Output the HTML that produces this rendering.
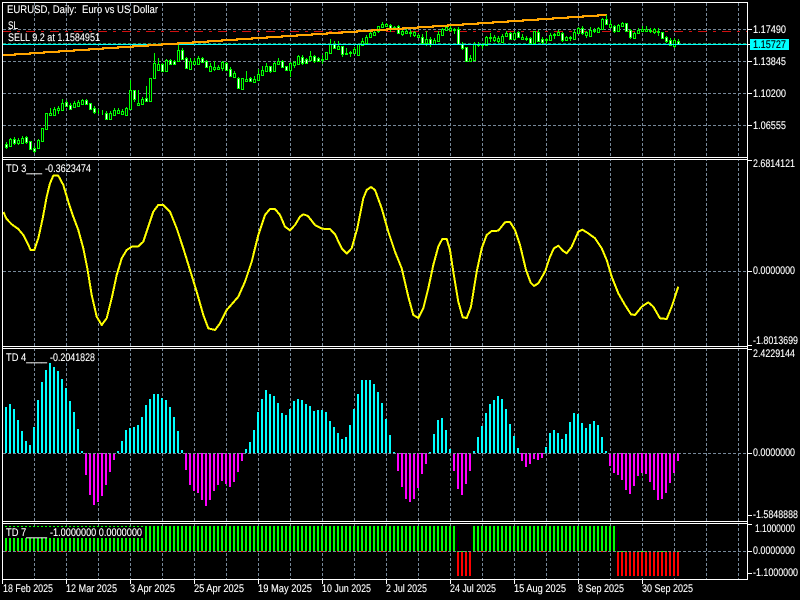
<!DOCTYPE html>
<html><head><meta charset="utf-8"><title>EURUSD, Daily</title>
<style>
html,body{margin:0;padding:0;background:#000;width:800px;height:600px;overflow:hidden}
svg{display:block}
text{font-family:"Liberation Sans",sans-serif;font-size:11px;fill:#fff;stroke:#fff;stroke-width:.12px}
</style></head><body>
<svg width="800" height="600" viewBox="0 0 800 600" shape-rendering="crispEdges" text-rendering="optimizeSpeed">
<rect width="800" height="600" fill="#000"/>
<!-- grid -->
<path fill="none" stroke="#778899" stroke-dasharray="3 2" d="M34.5 3V579M66.5 3V579M98.5 3V579M130.5 3V579M162.5 3V579M194.5 3V579M226.5 3V579M258.5 3V579M290.5 3V579M322.5 3V579M354.5 3V579M386.5 3V579M418.5 3V579M450.5 3V579M482.5 3V579M514.5 3V579M546.5 3V579M578.5 3V579M610.5 3V579M642.5 3V579M674.5 3V579M706.5 3V579M738.5 3V579"/>
<path fill="none" stroke="#778899" stroke-dasharray="3 2" d="M3 29.5H747M3 61.5H747M3 93.5H747M3 125.5H747M3 271.5H747"/>
<!-- order lines -->
<path fill="none" stroke="#d01010" stroke-dasharray="9 6 3 6" d="M2 31.5H747"/>
<path fill="none" stroke="#2e8b57" stroke-dasharray="3 2" d="M3 43.5H747"/>
<!-- wicks -->
<path fill="none" stroke="#00ff00" d="M6.5 142V149M10.5 138V147M14.5 137V145M18.5 138V145M22.5 136V144M26.5 136V144M30.5 141V149M34.5 146V153M38.5 139V148M42.5 128V141M46.5 113V129M50.5 108V116M54.5 107V115M58.5 106V114M62.5 99V110M66.5 100V107M70.5 103V110M74.5 101V108M78.5 100V107M82.5 99V105M86.5 99V105M90.5 103V110M94.5 106V114M98.5 109V114M102.5 110V115M106.5 111V120M110.5 111V120M114.5 108V116M118.5 108V114M122.5 109V115M126.5 107V115M130.5 80V109M134.5 90V102M138.5 90V106M142.5 97V105M146.5 86V101M150.5 78V101M154.5 53V78M158.5 58V71M162.5 63V72M166.5 59V71M170.5 59V65M174.5 60V65M178.5 44V61M182.5 48V59M186.5 57V68M190.5 58V69M194.5 58V65M198.5 56V64M202.5 57V63M206.5 60V68M210.5 63V72M214.5 61V71M218.5 65V70M222.5 61V71M226.5 62V71M230.5 67V77M234.5 71V77M238.5 77V89M242.5 78V90M246.5 71V81M250.5 77V82M254.5 76V83M258.5 69V80M262.5 66V75M266.5 63V71M270.5 66V73M274.5 62V71M278.5 58V65M282.5 60V68M286.5 66V71M290.5 62V77M294.5 61V68M298.5 55V65M302.5 55V65M306.5 58V64M310.5 51V60M314.5 55V63M318.5 57V62M322.5 55V64M326.5 52V60M330.5 39V53M334.5 41V49M338.5 41V50M342.5 46V57M346.5 48V55M350.5 51V57M354.5 47V54M358.5 44V55M362.5 38V46M366.5 35V43M370.5 31V38M374.5 30V36M378.5 26V33M382.5 22V28M386.5 23V27M390.5 24V32M394.5 26V29M398.5 25V34M402.5 28V36M406.5 29V34M410.5 30V37M414.5 31V37M418.5 34V38M422.5 34V44M426.5 31V46M430.5 37V47M434.5 38V44M438.5 31V41M442.5 28V36M446.5 26V31M450.5 26V32M454.5 28V34M458.5 27V44M462.5 42V50M466.5 47V61M470.5 55V61M474.5 42V60M478.5 42V47M482.5 43V49M486.5 36V46M490.5 33V42M494.5 35V42M498.5 36V43M502.5 34V43M506.5 31V37M510.5 32V40M514.5 31V40M518.5 31V38M522.5 34V40M526.5 36V41M530.5 37V45M534.5 31V45M538.5 30V42M542.5 37V44M546.5 38V45M550.5 33V41M554.5 33V39M558.5 30V36M562.5 32V42M566.5 36V41M570.5 36V41M574.5 30V40M578.5 27V34M582.5 26V35M586.5 31V38M590.5 27V36M594.5 28V33M598.5 27V33M602.5 18V29M606.5 15V25M610.5 20V28M614.5 25V33M618.5 24V32M622.5 22V27M626.5 23V32M630.5 29V39M634.5 32V39M638.5 28V34M642.5 26V32M646.5 26V32M650.5 28V33M654.5 28V34M658.5 28V36M662.5 32V39M666.5 36V43M670.5 38V46M674.5 38V48M678.5 39V45"/>
<!-- black bodies -->
<path fill="#000" stroke="#00ff00" d="M9.5 139.5h2v7h-2zM17.5 140.5h2v3h-2zM21.5 138.5h2v5h-2zM37.5 140.5h2v8h-2zM41.5 128.5h2v13h-2zM45.5 113.5h2v16h-2zM53.5 109.5h2v6h-2zM61.5 103.5h2v7h-2zM73.5 103.5h2v4h-2zM77.5 102.5h2v4h-2zM81.5 100.5h2v4h-2zM109.5 113.5h2v6h-2zM113.5 110.5h2v5h-2zM117.5 110.5h2v3h-2zM121.5 111.5h2v3h-2zM125.5 108.5h2v7h-2zM129.5 90.5h2v19h-2zM141.5 99.5h2v5h-2zM149.5 78.5h2v23h-2zM153.5 63.5h2v15h-2zM157.5 64.5h2v6h-2zM165.5 60.5h2v11h-2zM177.5 50.5h2v11h-2zM189.5 61.5h2v8h-2zM193.5 61.5h2v3h-2zM197.5 58.5h2v6h-2zM209.5 66.5h2v5h-2zM221.5 62.5h2v6h-2zM233.5 73.5h2v4h-2zM241.5 78.5h2v11h-2zM253.5 79.5h2v3h-2zM257.5 74.5h2v6h-2zM261.5 70.5h2v5h-2zM265.5 66.5h2v5h-2zM273.5 63.5h2v8h-2zM277.5 61.5h2v3h-2zM289.5 63.5h2v7h-2zM293.5 62.5h2v3h-2zM297.5 56.5h2v8h-2zM309.5 56.5h2v4h-2zM325.5 52.5h2v7h-2zM329.5 44.5h2v9h-2zM337.5 46.5h2v3h-2zM353.5 49.5h2v4h-2zM357.5 44.5h2v11h-2zM361.5 41.5h2v4h-2zM365.5 37.5h2v6h-2zM369.5 33.5h2v4h-2zM373.5 32.5h2v3h-2zM377.5 26.5h2v5h-2zM381.5 24.5h2v3h-2zM385.5 24.5h2v2h-2zM401.5 31.5h2v3h-2zM405.5 31.5h2v2h-2zM413.5 32.5h2v3h-2zM417.5 35.5h2v2h-2zM425.5 39.5h2v4h-2zM433.5 40.5h2v4h-2zM437.5 34.5h2v7h-2zM441.5 29.5h2v6h-2zM445.5 27.5h2v3h-2zM449.5 28.5h2v2h-2zM469.5 58.5h2v3h-2zM473.5 44.5h2v16h-2zM485.5 37.5h2v8h-2zM493.5 37.5h2v3h-2zM497.5 38.5h2v3h-2zM501.5 36.5h2v6h-2zM505.5 33.5h2v3h-2zM513.5 33.5h2v6h-2zM533.5 31.5h2v12h-2zM549.5 35.5h2v5h-2zM557.5 32.5h2v3h-2zM565.5 37.5h2v3h-2zM573.5 32.5h2v7h-2zM577.5 28.5h2v5h-2zM585.5 32.5h2v3h-2zM589.5 30.5h2v6h-2zM597.5 28.5h2v4h-2zM601.5 19.5h2v10h-2zM609.5 24.5h2v3h-2zM617.5 25.5h2v6h-2zM621.5 23.5h2v3h-2zM633.5 33.5h2v5h-2zM637.5 30.5h2v3h-2zM641.5 29.5h2v2h-2zM645.5 29.5h2v2h-2zM653.5 29.5h2v3h-2zM673.5 40.5h2v6h-2zM49.5 113.5h2v2h-2zM57.5 108.5h2v2h-2zM137.5 103.5h2v2h-2zM213.5 67.5h2v2h-2zM217.5 67.5h2v2h-2zM245.5 79.5h2v2h-2zM321.5 59.5h2v1h-2zM345.5 53.5h2v1h-2zM349.5 52.5h2v1h-2zM393.5 27.5h2v1h-2zM409.5 32.5h2v1h-2zM453.5 29.5h2v1h-2zM477.5 44.5h2v1h-2zM481.5 44.5h2v1h-2zM489.5 37.5h2v1h-2zM521.5 37.5h2v2h-2zM525.5 38.5h2v1h-2zM545.5 39.5h2v1h-2zM553.5 34.5h2v1h-2zM569.5 37.5h2v1h-2zM593.5 30.5h2v1h-2zM649.5 30.5h2v1h-2zM657.5 31.5h2v1h-2z"/>
<!-- white bodies -->
<path fill="#fff" stroke="#00ff00" d="M5.5 144.5h2v3h-2zM13.5 139.5h2v4h-2zM25.5 137.5h2v5h-2zM29.5 141.5h2v8h-2zM33.5 148.5h2v3h-2zM65.5 102.5h2v4h-2zM69.5 105.5h2v4h-2zM85.5 100.5h2v4h-2zM89.5 103.5h2v6h-2zM93.5 108.5h2v4h-2zM105.5 113.5h2v6h-2zM133.5 90.5h2v9h-2zM145.5 98.5h2v3h-2zM161.5 64.5h2v7h-2zM169.5 60.5h2v4h-2zM173.5 61.5h2v3h-2zM181.5 50.5h2v9h-2zM185.5 58.5h2v10h-2zM201.5 58.5h2v4h-2zM205.5 61.5h2v6h-2zM225.5 63.5h2v7h-2zM229.5 69.5h2v7h-2zM237.5 78.5h2v10h-2zM249.5 78.5h2v3h-2zM269.5 66.5h2v5h-2zM281.5 61.5h2v6h-2zM285.5 66.5h2v4h-2zM301.5 57.5h2v6h-2zM305.5 59.5h2v4h-2zM313.5 56.5h2v5h-2zM317.5 58.5h2v3h-2zM333.5 44.5h2v4h-2zM341.5 46.5h2v8h-2zM389.5 25.5h2v3h-2zM397.5 26.5h2v7h-2zM421.5 37.5h2v6h-2zM429.5 39.5h2v5h-2zM457.5 29.5h2v15h-2zM461.5 44.5h2v4h-2zM465.5 47.5h2v14h-2zM509.5 33.5h2v6h-2zM517.5 32.5h2v5h-2zM529.5 38.5h2v5h-2zM537.5 32.5h2v9h-2zM541.5 39.5h2v3h-2zM561.5 33.5h2v7h-2zM581.5 28.5h2v5h-2zM605.5 19.5h2v5h-2zM613.5 26.5h2v5h-2zM625.5 23.5h2v8h-2zM629.5 30.5h2v7h-2zM661.5 32.5h2v6h-2zM665.5 37.5h2v4h-2zM669.5 40.5h2v5h-2zM677.5 41.5h2v3h-2z"/>
<!-- bid -->
<path stroke="#00ffff" d="M3 44.5H747"/>
<!-- trend -->
<path fill="none" stroke="#ffa500" stroke-width="2" d="M3 55H15V54H30V53H44V52H59V51H74V50H89V49H103V48H118V47H133V46H148V45H162V44H178V43H193V42H208V41H222V40H237V39H252V38H267V37H282V36H297V35H312V34H327V33H342V32H357V31H372V30H387V29H403V28H418V27H433V26H448V25H463V24H478V23H493V22H508V21H523V20H538V19H553V18H568V17H583V16H598V15H607"/>
<path stroke="#00ff00" d="M606.5 15V19"/>
<!-- yellow -->
<path fill="none" stroke="#ffff00" stroke-width="2" stroke-linejoin="round" d="M3.3 212L6.7 219L11.7 224.3L18.3 229L23.3 235L28.3 245L30.7 250L34.3 250L38.3 238.3L42.7 218.3L46.7 196.7L50 183.3L53.3 175.7L58.3 175.7L63.3 185L68.3 201.7L73.3 216.7L78.3 230L83.3 248.3L87.3 268.3L91.7 295L96.7 316.7L101.7 325L106.7 318.3L111.7 298.3L116.7 275L121.7 258.3L126.7 250L131.7 246.7L138.3 246.3L143.3 241.7L148.3 226.7L153.3 211.7L158.3 205L163.3 205L170 211.7L176.7 228.3L183.3 248.3L190 270L196.7 291.7L203.3 315L208.3 328.3L215 330L220 323.3L226.7 310L231.7 304.3L238.3 296.7L245 281.7L251.7 261.7L258.3 235L265 215L270 209L275 209L280 215L285 226.7L290 230.3L295 225L300 216.7L303.3 214.3L308 216L315 225L322 228.7L330 229L335 234.3L341.7 248.3L346.7 253.7L351.7 248.3L357.3 228.3L363.3 198.3L366.7 190L371 187L375 190L381.7 208.3L388.3 231.7L395 251.7L401.7 268.3L408.3 296.7L413.3 315L418.3 318L423.3 308.3L428.3 288.3L433.3 265L438.3 246.7L442.3 239L446.7 239L450 250L453.3 271.7L458.3 301.7L462.7 317.3L466.7 318L471 306.7L476.7 271.7L481.7 248.3L486.7 235L491.7 231L498.3 230.7L505 222.3L510 222L515 230L520 245L526 270L530.7 282.7L534 286L538.3 283.3L545 271.7L550 256.7L554 248.3L558.3 245.7L563.3 251L566.7 253.3L571.7 246.7L578.3 231.7L582.3 229.7L588.3 233.3L595 238.3L601.7 248.3L606.7 260L611.7 276.7L618.3 293.3L625 305L631 314.3L635 315L641.7 306.7L648.3 302.3L653.3 306.7L660 318.3L666.7 319L671.7 306.7L678.3 286.7"/>
<!-- histogram -->
<path fill="none" stroke="#00ffff" stroke-width="2" d="M6 453V407M10 453V404M14 453V409M18 453V420M22 453V431M26 453V441M30 453V445M34 453V427M38 453V400M42 453V382M46 453V370M50 453V363M54 453V367M58 453V371M62 453V379M66 453V388M70 453V401M74 453V412M78 453V429M82 453V451M118 453V451M122 453V441M126 453V430M130 453V428M134 453V427M138 453V425M142 453V417M146 453V405M150 453V399M154 453V394M158 453V394M162 453V398M166 453V400M170 453V407M174 453V417M178 453V431M182 453V450M246 453V449M250 453V442M254 453V430M258 453V412M262 453V399M266 453V390M270 453V394M274 453V396M278 453V403M282 453V413M286 453V415M290 453V409M294 453V401M298 453V399M302 453V400M306 453V404M310 453V406M314 453V411M318 453V410M322 453V410M326 453V412M330 453V421M334 453V427M338 453V433M342 453V439M346 453V437M350 453V425M354 453V409M358 453V394M362 453V380M366 453V380M370 453V380M374 453V384M378 453V392M382 453V403M386 453V419M390 453V435M394 453V452M430 453V452M434 453V434M438 453V420M442 453V418M446 453V430M450 453V449M474 453V451M478 453V437M482 453V426M486 453V413M490 453V404M494 453V400M498 453V396M502 453V399M506 453V409M510 453V424M514 453V436M518 453V448M546 453V447M550 453V433M554 453V430M558 453V433M562 453V439M566 453V434M570 453V422M574 453V413M578 453V414M582 453V423M586 453V428M590 453V424M594 453V421M598 453V425M602 453V437M606 453V451"/>
<path fill="none" stroke="#ff00ff" stroke-width="2" d="M86 453V475M90 453V495M94 453V505M98 453V502M102 453V496M106 453V485M110 453V472M114 453V460M186 453V470M190 453V485M194 453V491M198 453V493M202 453V500M206 453V506M210 453V500M214 453V491M218 453V485M222 453V481M226 453V484M230 453V487M234 453V482M238 453V472M242 453V461M398 453V471M402 453V487M406 453V499M410 453V502M414 453V499M418 453V488M422 453V474M426 453V464M454 453V471M458 453V489M462 453V495M466 453V484M470 453V471M522 453V461M526 453V467M530 453V464M534 453V459M538 453V460M542 453V458M610 453V466M614 453V473M618 453V475M622 453V480M626 453V490M630 453V494M634 453V486M638 453V476M642 453V473M646 453V474M650 453V482M654 453V490M658 453V500M662 453V499M666 453V493M670 453V483M674 453V473M678 453V461"/>
<path fill="none" stroke="#778899" stroke-dasharray="3 2" d="M3 453.5H747"/>
<!-- TD 7 bars -->
<path fill="none" stroke="#00ff00" stroke-width="25" stroke-dasharray="2 2" d="M5 538.5H456M473 538.5H616"/>
<path fill="none" stroke="#ff0000" stroke-width="25" stroke-dasharray="2 2" d="M457 563.5H472M617 563.5H680"/>
<path fill="none" stroke="#ff0000" stroke-dasharray="2 2" d="M5 551.5H456M473 551.5H616"/>
<path fill="none" stroke="#00ff00" stroke-dasharray="2 2" d="M457 551.5H472M617 551.5H680"/>
<path fill="none" stroke="#778899" stroke-dasharray="3 2" d="M3 551.5H747"/>
<rect x="5" y="527" width="140" height="11" fill="#000"/>
<!-- separators -->
<rect x="3" y="158" width="744" height="1" fill="#000"/>
<rect x="3" y="347" width="744" height="1" fill="#000"/>
<rect x="3" y="522" width="744" height="1" fill="#000"/>
<path fill="none" stroke="#fff" d="M2.5 2.5H747.5V579.5H2.5ZM3 157.5H747M3 159.5H747M3 346.5H747M3 348.5H747M3 521.5H747M3 523.5H747"/>
<!-- right ticks -->
<path fill="none" stroke="#fff" d="M748 29.5H752M748 44.5H750M748 61.5H752M748 93.5H752M748 125.5H752M748 160.5H752M748 271.5H752M748 345.5H752M748 349.5H752M748 453.5H752M748 515.5H752M748 524.5H752M748 551.5H752M748 573.5H752"/>
<!-- bottom ticks -->
<path fill="none" stroke="#fff" d="M2.5 580V584M66.5 580V584M130.5 580V584M194.5 580V584M258.5 580V584M322.5 580V584M386.5 580V584M450.5 580V584M514.5 580V584M578.5 580V584M642.5 580V584"/>
<rect x="750" y="39" width="39" height="11" fill="#00ffff"/>
<!-- labels -->
<g text-rendering="geometricPrecision">
<text x="7" y="13" textLength="151" lengthAdjust="spacingAndGlyphs" xml:space="preserve">EURUSD, Daily:  Euro vs US Dollar</text>
<text x="8" y="29" textLength="10" lengthAdjust="spacingAndGlyphs">SL</text>
<text x="8" y="41" textLength="92" lengthAdjust="spacingAndGlyphs">SELL 9.2 at 1.1584951</text>
<text x="6" y="172" textLength="36" lengthAdjust="spacingAndGlyphs">TD 3___</text>
<text x="45" y="172" textLength="46" lengthAdjust="spacingAndGlyphs">-0.3623474</text>
<text x="6" y="361" textLength="41" lengthAdjust="spacingAndGlyphs">TD 4____</text>
<text x="50" y="361" textLength="45" lengthAdjust="spacingAndGlyphs">-0.2041828</text>
<text x="6" y="536" textLength="41" lengthAdjust="spacingAndGlyphs">TD 7____</text>
<text x="50" y="536" textLength="92" lengthAdjust="spacingAndGlyphs">-1.0000000 0.0000000</text>
<text x="753" y="33" textLength="33" lengthAdjust="spacingAndGlyphs">1.17490</text>
<text x="753" y="48" textLength="33" lengthAdjust="spacingAndGlyphs" style="fill:#000;stroke:#000">1.15727</text>
<text x="753" y="65" textLength="33" lengthAdjust="spacingAndGlyphs">1.13845</text>
<text x="753" y="97" textLength="33" lengthAdjust="spacingAndGlyphs">1.10200</text>
<text x="753" y="129" textLength="33" lengthAdjust="spacingAndGlyphs">1.06555</text>
<text x="753" y="167" textLength="42" lengthAdjust="spacingAndGlyphs">2.6814121</text>
<text x="753" y="274" textLength="42" lengthAdjust="spacingAndGlyphs">0.0000000</text>
<text x="753" y="344" textLength="45" lengthAdjust="spacingAndGlyphs">-1.8013699</text>
<text x="753" y="357" textLength="42" lengthAdjust="spacingAndGlyphs">2.4229144</text>
<text x="753" y="456" textLength="42" lengthAdjust="spacingAndGlyphs">0.0000000</text>
<text x="753" y="518" textLength="45" lengthAdjust="spacingAndGlyphs">-1.5848888</text>
<text x="755" y="532" textLength="40" lengthAdjust="spacingAndGlyphs">1.1000000</text>
<text x="753" y="554" textLength="42" lengthAdjust="spacingAndGlyphs">0.0000000</text>
<text x="753" y="576" textLength="45" lengthAdjust="spacingAndGlyphs">-1.1000000</text>
<text x="3" y="592" textLength="50" lengthAdjust="spacingAndGlyphs">18 Feb 2025</text>
<text x="66" y="592" textLength="51" lengthAdjust="spacingAndGlyphs">12 Mar 2025</text>
<text x="130" y="592" textLength="45" lengthAdjust="spacingAndGlyphs">3 Apr 2025</text>
<text x="194" y="592" textLength="50" lengthAdjust="spacingAndGlyphs">25 Apr 2025</text>
<text x="258" y="592" textLength="54" lengthAdjust="spacingAndGlyphs">19 May 2025</text>
<text x="322" y="592" textLength="49" lengthAdjust="spacingAndGlyphs">10 Jun 2025</text>
<text x="386" y="592" textLength="41" lengthAdjust="spacingAndGlyphs">2 Jul 2025</text>
<text x="450" y="592" textLength="46" lengthAdjust="spacingAndGlyphs">24 Jul 2025</text>
<text x="514" y="592" textLength="52" lengthAdjust="spacingAndGlyphs">15 Aug 2025</text>
<text x="578" y="592" textLength="46" lengthAdjust="spacingAndGlyphs">8 Sep 2025</text>
<text x="642" y="592" textLength="51" lengthAdjust="spacingAndGlyphs">30 Sep 2025</text>
</g>
</svg>
</body></html>
